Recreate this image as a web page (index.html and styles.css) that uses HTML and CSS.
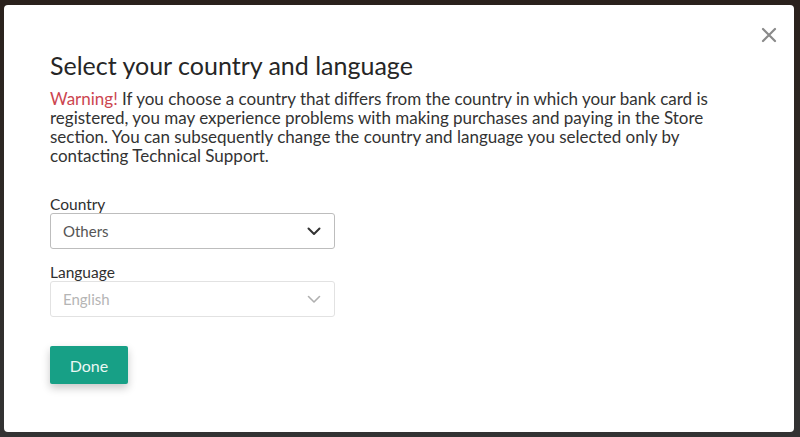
FILE: index.html
```html
<!DOCTYPE html>
<html lang="en">
<head>
<meta charset="utf-8">
<title>Select your country and language</title>
<link rel="stylesheet" href="styles.css">
</head>
<body>
<div class="backdrop">
  <div class="modal">
    <button class="close" aria-label="Close">
      <svg width="16" height="16" viewBox="0 0 16 16"><path d="M2 2L14 14M14 2L2 14" stroke="#8a8a8a" stroke-width="2.2" stroke-linecap="round"/></svg>
    </button>
    <h1 class="title">Select your country and language</h1>
    <p class="text"><span class="warn">Warning!</span> If you choose a country that differs from the country in which your bank card is registered, you may experience problems with making purchases and paying in the Store section. You can subsequently change the country and language you selected only by contacting Technical Support.</p>
    <div class="field">
      <label class="label">Country</label>
      <div class="select">
        <span>Others</span>
        <svg width="14" height="9" viewBox="0 0 14 9"><path d="M1.5 1.5L7 7L12.5 1.5" fill="none" stroke="#333" stroke-width="2" stroke-linecap="round" stroke-linejoin="round"/></svg>
      </div>
    </div>
    <div class="field">
      <label class="label">Language</label>
      <div class="select disabled">
        <span>English</span>
        <svg width="14" height="9" viewBox="0 0 14 9"><path d="M1.5 1.5L7 7L12.5 1.5" fill="none" stroke="#b0b0b0" stroke-width="1.6" stroke-linecap="round" stroke-linejoin="round"/></svg>
      </div>
    </div>
    <button class="done">Done</button>
  </div>
</div>
</body>
</html>
```
FILE: styles.css
```css
html, body {
  margin: 0;
  padding: 0;
  height: 100%;
}
body {
  background: #2b2623;
  font-family: Lato, "Open Sans", sans-serif;
}
.backdrop {
  height: 437px;
  box-sizing: border-box;
  padding: 5px 6px 5px 4px;
  background: linear-gradient(#2a211c 0%, #2e2a27 50%, #333 100%);
}
.modal {
  position: relative;
  height: 427px;
  box-sizing: border-box;
  background: #fff;
  border-radius: 4px;
  padding: 45px 0 0 46px;
}
.close {
  position: absolute;
  top: 22px;
  right: 17px;
  border: 0;
  background: none;
  padding: 0;
  cursor: pointer;
}
.title {
  margin: 0;
  font-weight: 400;
  font-size: 25px;
  line-height: 30px;
  color: #262626;
}
.text {
  margin: 9px 0 0;
  width: 700px;
  font-size: 17px;
  line-height: 19px;
  color: #333;
}
.warn {
  color: #cc4650;
}
.text + .field {
  margin-top: 30px;
}
.label {
  display: block;
  font-size: 15.5px;
  line-height: 18px;
  color: #2f2f2f;
}
.select {
  box-sizing: border-box;
  width: 285px;
  height: 36px;
  border: 1px solid #bdbdbd;
  border-radius: 3px;
  display: flex;
  align-items: center;
  justify-content: space-between;
  padding: 0 13px 0 12px;
  font-size: 15px;
  color: #555;
  margin-bottom: 14px;
}
.select.disabled {
  border-color: #e2e2e2;
  color: #b5b5b5;
}
.done {
  margin-top: 15px;
  width: 78px;
  height: 38px;
  border: 0;
  border-radius: 2px;
  background: #17a086;
  color: #eaf7f3;
  font-family: inherit;
  font-size: 16px;
  box-shadow: 0 4px 8px rgba(0,0,0,0.22);
  cursor: pointer;
}
```
